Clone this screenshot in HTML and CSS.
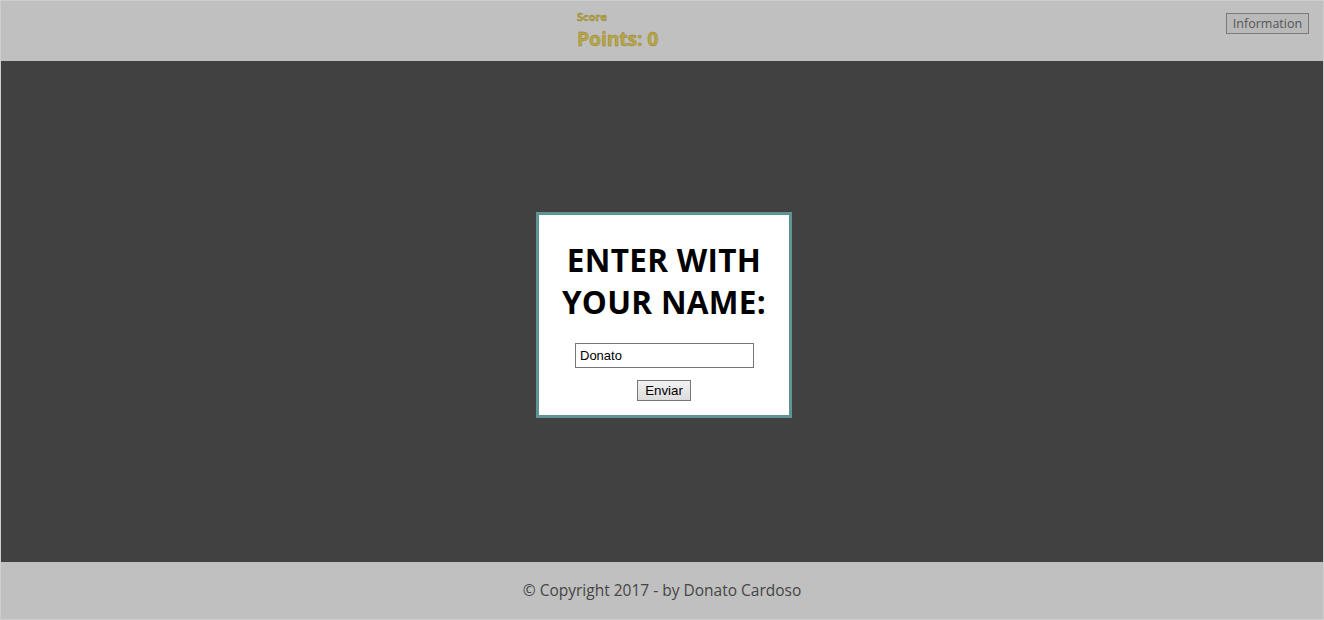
FILE: index.html
```html
<!DOCTYPE html>
<html>
<head>
<meta charset="utf-8">
<link rel="stylesheet" href="styles.css">
</head>
<body>
<div class="page">
  <header class="top">
    <div class="score">
      <div class="score-label">Score</div>
      <div class="score-points">Points: 0</div>
    </div>
    <button class="info-btn">Information</button>
  </header>
  <main class="stage">
    <div class="modal">
      <h1 class="modal-title">ENTER WITH<br>YOUR NAME:</h1>
      <input class="name-input" type="text" value="Donato">
      <button class="send-btn">Enviar</button>
    </div>
  </main>
  <footer class="bottom">© Copyright 2017 - by Donato Cardoso</footer>
</div>
</body>
</html>
```
FILE: styles.css
```css
html, body {
  margin: 0;
  padding: 0;
  height: 100%;
}
body {
  font-family: "Open Sans", "Noto Sans", sans-serif;
  background: #c0c0c0;
}
.page {
  box-sizing: border-box;
  height: 620px;
  border: 1px solid #cecece;
  display: flex;
  flex-direction: column;
}
.top {
  height: 60px;
  background: #c0c0c0;
  position: relative;
  display: flex;
  align-items: flex-start;
  padding-left: 576px;
  box-sizing: border-box;
}
.score {
  padding-top: 8px;
  color: #b8a643;
  font-weight: 700;
  -webkit-text-stroke: 0.4px #8f7f35;
}
.score-label {
  font-size: 11px;
  line-height: 15px;
  margin-bottom: 3px;
}
.score-points {
  font-size: 19.5px;
  line-height: 24px;
  letter-spacing: -0.2px;
}
.info-btn {
  position: absolute;
  top: 12px;
  right: 14px;
  height: 21px;
  width: 83px;
  padding: 0;
  border: 1px solid #7b7b7b;
  background: #b9b9b9;
  color: #555;
  font-family: "Open Sans", sans-serif;
  font-size: 12.5px;
  line-height: 18px;
}
.stage {
  flex: 1;
  background: #414141;
  display: flex;
  align-items: center;
  justify-content: center;
  padding: 7px 0 0 4px;
}
.modal {
  width: 250px;
  height: 200px;
  box-sizing: content-box;
  background: #fff;
  border: 3px solid #5f9494;
  display: flex;
  flex-direction: column;
  align-items: center;
}
.modal-title {
  margin: 24px 0 0;
  font-family: "Open Sans", sans-serif;
  font-weight: 700;
  font-size: 31.5px;
  line-height: 42px;
  text-align: center;
  color: #000;
  letter-spacing: 0.3px;
}
.name-input {
  margin-top: 20px;
  width: 179px;
  height: 25px;
  box-sizing: border-box;
  border: 1px solid #767676;
  padding: 0 4px;
  font-family: "Liberation Sans", Arial, sans-serif;
  font-size: 13px;
  color: #000;
  margin-left: 1px;
}
.send-btn {
  margin-top: 12px;
  width: 54px;
  height: 21px;
  padding: 0;
  border: 1px solid #767676;
  background: linear-gradient(#f2f2f2, #dcdcdc);
  font-family: "Liberation Sans", Arial, sans-serif;
  font-size: 13.3px;
  color: #000;
}
.bottom {
  height: 57px;
  background: #c0c0c0;
  color: #454545;
  font-size: 15.5px;
  display: flex;
  align-items: center;
  justify-content: center;
  padding-bottom: 2px;
  box-sizing: border-box;
}
```
